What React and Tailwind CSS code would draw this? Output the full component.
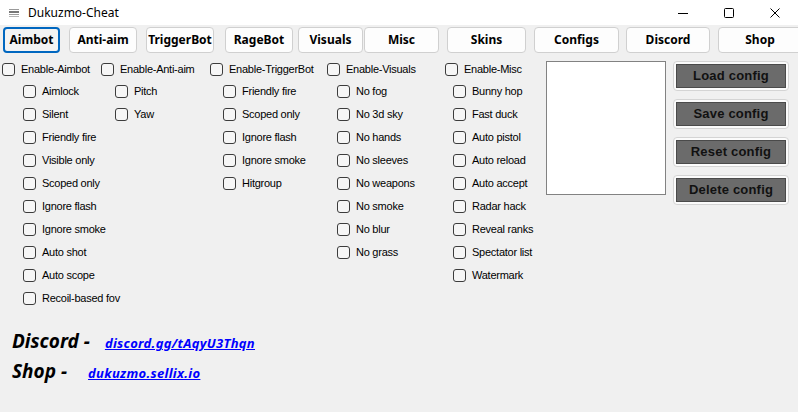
import React from 'react';

const tabs = [
  { label: 'Aimbot', w: 'w-[57px]', ml: 'ml-[3px]', active: true },
  { label: 'Anti-aim', w: 'w-[68px]', ml: 'ml-[9px]' },
  { label: 'TriggerBot', w: 'w-[68px]', ml: 'ml-[9px]' },
  { label: 'RageBot', w: 'w-[68px]', ml: 'ml-[11px]' },
  { label: 'Visuals', w: 'w-[65px]', ml: 'ml-[5px]' },
  { label: 'Misc', w: 'w-[75px]', ml: 'ml-[1px]' },
  { label: 'Skins', w: 'w-[79px]', ml: 'ml-[8px]' },
  { label: 'Configs', w: 'w-[85px]', ml: 'ml-[8px]' },
  { label: 'Discord', w: 'w-[84px]', ml: 'ml-[7px]' },
  { label: 'Shop', w: 'w-[84px]', ml: 'ml-[8px]' },
];

const columns = [
  {
    title: 'Enable-Aimbot',
    w: 'w-[99px]',
    indent: 'pl-[21px]',
    items: ['Aimlock', 'Silent', 'Friendly fire', 'Visible only', 'Scoped only', 'Ignore flash', 'Ignore smoke', 'Auto shot', 'Auto scope', 'Recoil-based fov'],
  },
  { title: 'Enable-Anti-aim', w: 'w-[109px]', indent: 'pl-[14px]', items: ['Pitch', 'Yaw'] },
  {
    title: 'Enable-TriggerBot',
    w: 'w-[117px]',
    indent: 'pl-[13px]',
    items: ['Friendly fire', 'Scoped only', 'Ignore flash', 'Ignore smoke', 'Hitgroup'],
  },
  {
    title: 'Enable-Visuals',
    w: 'w-[118px]',
    indent: 'pl-[10px]',
    items: ['No fog', 'No 3d sky', 'No hands', 'No sleeves', 'No weapons', 'No smoke', 'No blur', 'No grass'],
  },
  {
    title: 'Enable-Misc',
    w: 'w-[101px]',
    indent: 'pl-[8px]',
    items: ['Bunny hop', 'Fast duck', 'Auto pistol', 'Auto reload', 'Auto accept', 'Radar hack', 'Reveal ranks', 'Spectator list', 'Watermark'],
  },
];

function Check({ label, className = 'h-[23px]' }) {
  return (
    <label className={`flex items-center gap-[6px] whitespace-nowrap ${className}`}>
      <span className="w-[13px] h-[13px] shrink-0 rounded-[3px] border border-[#3c3c3c] bg-[#f6f6f6]"></span>
      <span className="text-[11px] text-black leading-none tracking-[-0.25px]">{label}</span>
    </label>
  );
}

function ConfigButton({ label }) {
  return (
    <div className="w-[116px] h-[30px] rounded-[4px] border border-[#d4d4d4] bg-[#fbfbfb] p-[2px]">
      <div className="w-full h-full bg-[#6b6b6b] border border-[#4a4a4a] flex items-center justify-center">
        <span className="text-[13px] font-bold text-[#111] tracking-[0.2px]">{label}</span>
      </div>
    </div>
  );
}

export default function App() {
  return (
    <div className="w-[798px] h-[412px] bg-[#f0f0f0] overflow-hidden" style={{ fontFamily: '"Liberation Sans", Arial, sans-serif' }}>
      {/* title bar */}
      <div className="h-[25px] bg-white flex items-center">
        <svg width="10" height="8" viewBox="0 0 10 8" className="ml-[9px]">
          <rect x="0" y="0" width="10" height="1" fill="#9a9a9a" />
          <rect x="0" y="2" width="10" height="2" fill="#777" />
          <rect x="0" y="5" width="10" height="1" fill="#9a9a9a" />
          <rect x="0" y="7" width="10" height="1" fill="#b5b5b5" />
        </svg>
        <span className="ml-[9px] text-[12px] text-black" style={{ fontFamily: '"Noto Sans", sans-serif' }}>Dukuzmo-Cheat</span>
        <div className="ml-auto flex items-center">
          <div className="w-[46px] h-[25px] flex items-center justify-center">
            <svg width="10" height="10" viewBox="0 0 10 10"><path d="M0 5.5h10" stroke="#000" strokeWidth="1" /></svg>
          </div>
          <div className="w-[46px] h-[25px] flex items-center justify-center">
            <svg width="10" height="10" viewBox="0 0 10 10"><rect x="0.5" y="0.5" width="9" height="9" rx="1" fill="none" stroke="#000" strokeWidth="1" /></svg>
          </div>
          <div className="w-[46px] h-[25px] flex items-center justify-center">
            <svg width="10" height="10" viewBox="0 0 10 10"><path d="M0.5 0.5L9.5 9.5M9.5 0.5L0.5 9.5" stroke="#000" strokeWidth="1" /></svg>
          </div>
        </div>
      </div>

      {/* tabs */}
      <div className="flex mt-[2px] h-[26px]" style={{ fontFamily: '"Noto Sans", sans-serif' }}>
        {tabs.map((t) => (
          <div
            key={t.label}
            className={`${t.w} ${t.ml} shrink-0 h-[26px] rounded-[4px] flex items-center justify-center text-[12px] font-bold text-black ${
              t.active ? 'border-2 border-[#0067c0] bg-[#f3f3f3]' : 'border border-[#d0d0d0] bg-[#fdfdfd]'
            }`}
          >
            {t.label}
          </div>
        ))}
      </div>

      {/* main */}
      <div className="flex mt-[5px]">
        <div className="flex pl-[2px]">
          {columns.map((c) => (
            <div key={c.title} className={`${c.w} shrink-0 flex flex-col`}>
              <Check label={c.title} className="h-[22px]" />
              <div className={`flex flex-col ${c.indent}`}>
                {c.items.map((i) => (
                  <Check key={i} label={i} />
                ))}
              </div>
            </div>
          ))}
        </div>
        <div className="w-[120px] h-[134px] mt-[3px] shrink-0 bg-white border border-[#828282]"></div>
        <div className="ml-[7px] pt-[3px] flex flex-col gap-[8px]">
          <ConfigButton label="Load config" />
          <ConfigButton label="Save config" />
          <ConfigButton label="Reset config" />
          <ConfigButton label="Delete config" />
        </div>
      </div>

      {/* links */}
      <div className="mt-[17px] pl-[12px] flex flex-col" style={{ fontFamily: '"Noto Sans", sans-serif' }}>
        <div className="flex items-baseline h-[30px]">
          <span className="text-[19px] font-bold italic text-black">Discord -</span>
          <span className="ml-[15px] text-[13px] font-bold italic text-[#0000ff] underline tracking-[0.3px]">discord.gg/tAqyU3Thqn</span>
        </div>
        <div className="flex items-baseline h-[30px]">
          <span className="text-[19px] font-bold italic text-black">Shop -</span>
          <span className="ml-[21px] text-[13px] font-bold italic text-[#0000ff] underline tracking-[0.3px]">dukuzmo.sellix.io</span>
        </div>
      </div>
    </div>
  );
}
